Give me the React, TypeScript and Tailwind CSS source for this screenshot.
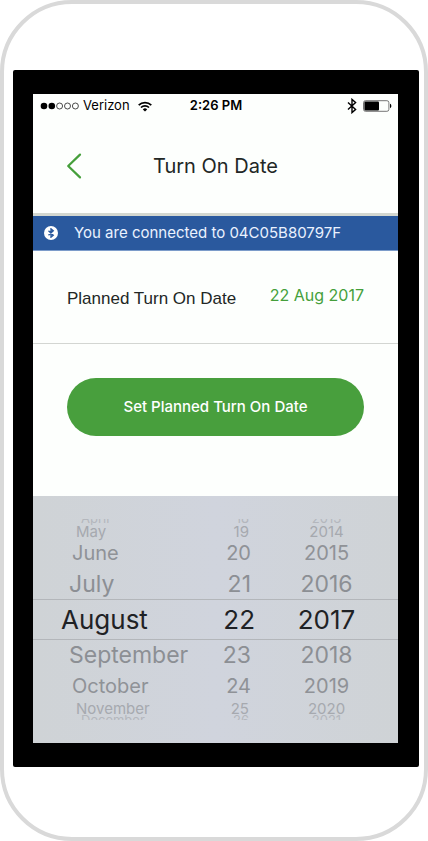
import { useState } from 'react';
import clsx from 'clsx';

const MONTHS = [
  'January', 'February', 'March', 'April', 'May', 'June',
  'July', 'August', 'September', 'October', 'November', 'December',
];
const DAYS = Array.from({ length: 31 }, (_, i) => String(i + 1));
const YEARS = Array.from({ length: 21 }, (_, i) => String(2007 + i));

// row look by distance from the selected row
const ROW_STYLES = [
  'h-[41px] text-[26px] text-[#1f2225] border-y border-[#b3b6ba]',
  'h-[30px] text-[23px] text-[#8c8f94]',
  'h-8 text-xl text-[#8f9297]',
  'h-3 text-[15px] text-[#a6a9af]',
  'h-1.5 text-[13px] text-[#b4b7bd] overflow-hidden',
];
const LEFT_INSETS = ['pl-7', 'pl-9', 'pl-[39px]', 'pl-[43px]', 'pl-12'];
const RIGHT_INSETS = ['pr-0', 'pr-1', 'pr-1', 'pr-1.5', 'pr-1.5'];

interface WheelProps {
  label: string;
  items: string[];
  selected: number;
  align: 'left' | 'right' | 'center';
  onSelect: (index: number) => void;
}

const Wheel = ({ label, items, selected, align, onSelect }: WheelProps) => (
  <ul aria-label={label}>
    {[-4, -3, -2, -1, 0, 1, 2, 3, 4].map((offset) => {
      const index = (selected + offset + items.length) % items.length;
      const distance = Math.abs(offset);
      return (
        <li key={offset}>
          <button
            type="button"
            aria-pressed={offset === 0}
            onClick={() => onSelect(index)}
            className={clsx(
              'flex w-full leading-none',
              ROW_STYLES[distance],
              offset === -4 ? 'items-end' : offset === 4 ? 'items-start' : 'items-center',
              align === 'left' && ['justify-start', LEFT_INSETS[distance]],
              align === 'right' && ['justify-end', RIGHT_INSETS[distance]],
              align === 'center' && 'justify-center',
            )}
          >
            {items[index]}
          </button>
        </li>
      );
    })}
  </ul>
);

interface BluetoothIconProps {
  className?: string;
  strokeWidth?: number;
}

const BluetoothIcon = ({ className, strokeWidth = 1.4 }: BluetoothIconProps) => (
  <svg viewBox="0 0 10 16" className={className} fill="none" stroke="currentColor" strokeWidth={strokeWidth} aria-hidden="true">
    <path d="M1 4.4 8.6 11.4 5 14.6V1.4L8.6 4.6 1 11.6" />
  </svg>
);

const WifiIcon = () => (
  <svg viewBox="0 0 14 11" className="ml-2 h-[11px] w-3.5" fill="none" stroke="#000" strokeWidth="1.7" aria-hidden="true">
    <path d="M.7 4.1a9 9 0 0 1 12.6 0" />
    <path d="M3 6.5a5.7 5.7 0 0 1 8 0" />
    <path d="M7 10.6 4.8 8.4a3.1 3.1 0 0 1 4.4 0z" fill="#000" stroke="none" />
  </svg>
);

const StatusBar = () => (
  <div className="grid h-6 grid-cols-[1fr_auto_1fr] items-center pr-1.5 pl-[7px] text-[13px] text-black">
    <div className="flex items-center">
      <svg viewBox="0 0 39 8" className="mr-1 h-2 w-[39px]" aria-hidden="true">
        <circle cx="4" cy="4" r="3.3" />
        <circle cx="11.8" cy="4" r="3.3" />
        <g fill="none" stroke="#000" strokeWidth=".7">
          <circle cx="19.6" cy="4" r="3" />
          <circle cx="27.5" cy="4" r="3" />
          <circle cx="35.4" cy="4" r="3" />
        </g>
      </svg>
      <span>Verizon</span>
      <WifiIcon />
    </div>
    <span className="font-semibold">2:26 PM</span>
    <div className="flex items-center justify-end gap-1.5">
      <BluetoothIcon className="h-4 w-2.5" />
      <svg viewBox="0 0 29 12" className="h-3 w-[29px]" aria-hidden="true">
        <rect x=".5" y=".7" width="25.4" height="10.6" rx="2" fill="none" stroke="#666" strokeWidth=".9" />
        <rect x="1.4" y="1.6" width="14.6" height="8.8" rx="1" />
        <path d="M27 3.8c1.8.6 1.8 3.8 0 4.4z" />
      </svg>
    </div>
  </div>
);

const App = () => {
  const [month, setMonth] = useState(7);
  const [day, setDay] = useState(21);
  const [year, setYear] = useState(10);
  const [planned, setPlanned] = useState('22 Aug 2017');

  const handleSet = () => {
    setPlanned(`${DAYS[day]} ${MONTHS[month].slice(0, 3)} ${YEARS[year]}`);
  };

  return (
    <div className="rounded-[72px] border-4 border-[#d9d9d9] bg-white pt-[66px] pr-[5px] pb-[70px] pl-[9px] font-['Inter',sans-serif]">
      <div className="rounded-xs bg-black py-6 pr-[21px] pl-5">
        <main className="bg-[#fdfffd]">
          <StatusBar />

          <header className="grid h-[95px] grid-cols-[1fr_auto_1fr] items-center px-8">
            <button type="button" aria-label="Back" className="w-fit text-[#459f3b]">
              <svg viewBox="0 0 18 26" className="h-[26px] w-[18px]" fill="none" stroke="currentColor" strokeWidth="2.2" strokeLinecap="round" strokeLinejoin="round">
                <path d="M15 1.6 3.2 13 15 24.4" />
              </svg>
            </button>
            <h1 className="text-xl text-[#222725]">Turn On Date</h1>
          </header>

          <div className="flex h-[38px] items-center border-t-3 border-b border-t-[#d3d7d0] border-b-[#7c9cca] bg-[#2a599e] px-[11px] text-[15px] text-[#eaf2ff]">
            <span className="mr-4 flex size-3.5 items-center justify-center rounded-full bg-white text-[#2a599e]">
              <BluetoothIcon className="h-2.5 w-2" strokeWidth={2.2} />
            </span>
            You are connected to 04C05B80797F
          </div>

          <div className="flex items-start justify-between border-b border-[#d3d6d2] px-[34px] pt-9 pb-8">
            <span className="font-['Liberation_Sans',sans-serif] text-[17px] leading-6 text-[#222725]">
              Planned Turn On Date
            </span>
            <span className="text-base leading-4 text-[#459f3b]">{planned}</span>
          </div>

          <div className="px-[34px] pt-[34px] pb-[60px]">
            <button
              type="button"
              onClick={handleSet}
              className="h-[58px] w-full rounded-full bg-[#489f3d] text-[15px] font-medium text-white"
            >
              Set Planned Turn On Date
            </button>
          </div>

          <div className="grid grid-cols-[160fr_62fr_143fr] bg-linear-to-r from-[#cfd3d6] via-[#d0d4dd] to-[#cfd3d6] py-[23px]">
            <Wheel label="Month" items={MONTHS} selected={month} align="left" onSelect={setMonth} />
            <Wheel label="Day" items={DAYS} selected={day} align="right" onSelect={setDay} />
            <Wheel label="Year" items={YEARS} selected={year} align="center" onSelect={setYear} />
          </div>
        </main>
      </div>
    </div>
  );
};

export default App;
